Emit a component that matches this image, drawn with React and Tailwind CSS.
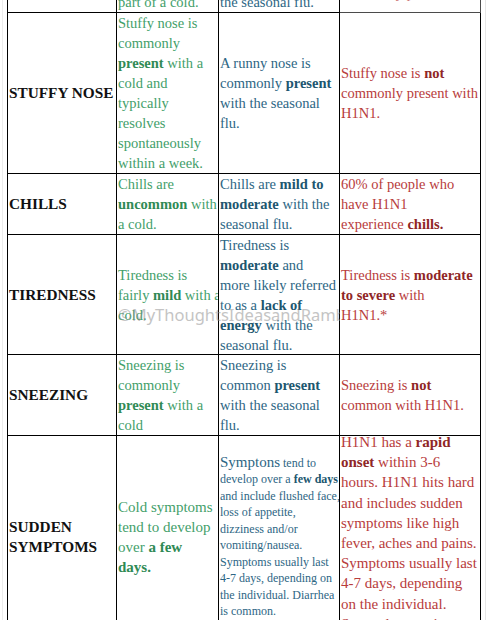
const green = 'text-[#43a06a]'
const blue = 'text-[#2d6684]'
const red = 'text-[#b83c3c]'

function G({ children }) {
  return <b className="font-bold text-[#2f8a55]">{children}</b>
}
function B({ children }) {
  return <b className="font-bold text-[#20566f]">{children}</b>
}
function R({ children }) {
  return <b className="font-bold text-[#8f2626]">{children}</b>
}

function Label({ children }) {
  return (
    <div className="flex items-center border-r border-b border-black pl-px text-[15.3px] font-bold leading-[20px] text-[#111]">
      <div>{children}</div>
    </div>
  )
}

function Cell({ color, children, className = '' }) {
  return (
    <div className={`flex items-center overflow-hidden border-r border-b border-black pl-px text-[14.5px] leading-[20px] whitespace-nowrap ${color} ${className}`}>
      <div>{children}</div>
    </div>
  )
}

function Row({ h, children }) {
  return <div className={`grid grid-cols-[109px_102px_121px_141px] ${h}`}>{children}</div>
}

export default function App() {
  return (
    <div className="relative h-[620px] w-[492px] overflow-hidden bg-white font-serif">
      <div className="absolute inset-y-0 left-[2px] w-px bg-[#ececec]" />
      <div className="absolute inset-y-0 left-[485px] w-px bg-[#e6e6e6]" />

      <div className="relative ml-[7px] w-[474px] border-l border-black font-['Liberation_Serif']">
        {/* row cut off at the top */}
        <div className="grid h-[13px] grid-cols-[109px_102px_121px_141px]">
          <div className="border-r border-b border-black" />
          <Cell color={green} className="items-end!">part of a cold.</Cell>
          <Cell color={blue} className="items-end!">the seasonal flu.</Cell>
          <Cell color={red} className="items-end! pb-[9px] opacity-70">commonly present with H1N1.</Cell>
        </div>

        <Row h="h-[161px]">
          <Label>STUFFY NOSE</Label>
          <Cell color={green}>
            Stuffy nose is<br />commonly<br /><G>present</G> with a<br />cold and<br />typically<br />resolves<br />spontaneously<br />within a week.
          </Cell>
          <Cell color={blue}>
            A runny nose is<br />commonly <B>present</B><br />with the seasonal<br />flu.
          </Cell>
          <Cell color={red}>
            Stuffy nose is <R>not</R><br />commonly present with<br />H1N1.
          </Cell>
        </Row>

        <Row h="h-[61px]">
          <Label>CHILLS</Label>
          <Cell color={green}>
            Chills are<br /><G>uncommon</G> with<br />a cold.
          </Cell>
          <Cell color={blue}>
            Chills are <B>mild to</B><br /><B>moderate</B> with the<br />seasonal flu.
          </Cell>
          <Cell color={red}>
            60% of people who<br />have H1N1<br />experience <R>chills.</R>
          </Cell>
        </Row>

        <Row h="h-[120px]">
          <Label>TIREDNESS</Label>
          <Cell color={green}>
            Tiredness is<br />fairly <G>mild</G> with a<br />cold.
          </Cell>
          <Cell color={blue}>
            Tiredness is<br /><B>moderate</B> and<br />more likely referred<br />to as a <B>lack of</B><br /><B>energy</B> with the<br />seasonal flu.
          </Cell>
          <Cell color={red}>
            Tiredness is <R>moderate</R><br /><R>to severe</R> with<br />H1N1.*
          </Cell>
        </Row>

        <Row h="h-[81px]">
          <Label>SNEEZING</Label>
          <Cell color={green}>
            Sneezing is<br />commonly<br /><G>present</G> with a<br />cold
          </Cell>
          <Cell color={blue}>
            Sneezing is<br />common <B>present</B><br />with the seasonal<br />flu.
          </Cell>
          <Cell color={red}>
            Sneezing is <R>not</R><br />common with H1N1.
          </Cell>
        </Row>

        <Row h="h-[202px]">
          <Label>
            SUDDEN<br />SYMPTOMS
          </Label>
          <Cell color={green} className="text-[15px]!">
            Cold symptoms<br />tend to develop<br />over <G>a few</G><br /><G>days.</G>
          </Cell>
          <Cell color={blue} className="text-[12px]! leading-[16.5px]!">
            <span className="text-[15px]">Symptons</span> tend to<br />develop over a <B>few days</B><br />and include flushed face,<br />loss of appetite,<br />dizziness and/or<br />vomiting/nausea.<br />Symptoms usually last<br />4-7 days, depending on<br />the individual. Diarrhea<br />is common.
          </Cell>
          <Cell color={red} className="items-start! text-[15px]! leading-[20.2px]!">
            <div className="-mt-[4px]">
              H1N1 has a <R>rapid</R><br /><R>onset</R> within 3-6<br />hours. H1N1 hits hard<br />and includes sudden<br />symptoms like high<br />fever, aches and pains.<br />Symptoms usually last<br />4-7 days, depending<br />on the individual.<br />Some also vomit.
            </div>
          </Cell>
        </Row>

        {/* watermark over the tiredness row */}
        <div className="pointer-events-none absolute left-[110px] top-[305px] w-[222px] overflow-hidden whitespace-nowrap font-sans text-[16.5px] leading-[20px] text-[#8a8a8a] opacity-50">
          ©MyThoughtsIdeasandRambles
        </div>
      </div>
    </div>
  )
}
